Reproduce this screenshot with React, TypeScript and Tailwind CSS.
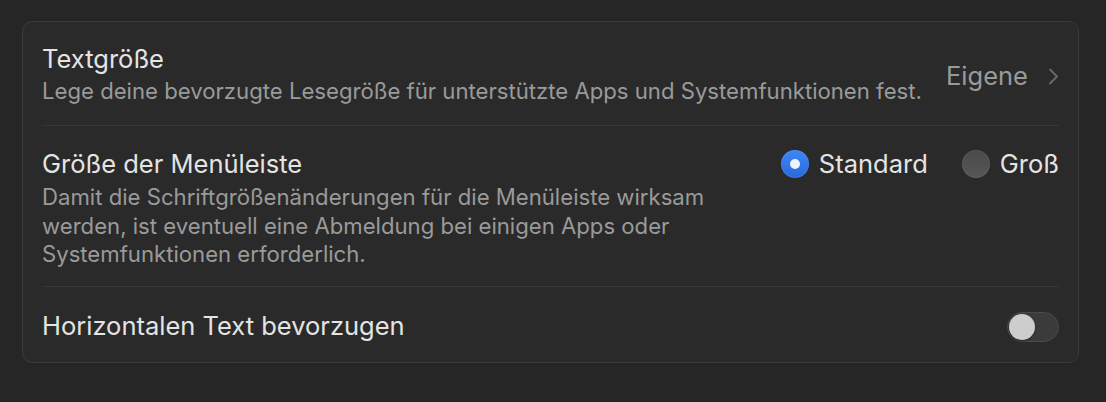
import React from 'react';

const font = { fontFamily: 'Inter, "Noto Sans", "Liberation Sans", sans-serif' };

function Radio({ checked, label }: { checked: boolean; label: string }) {
  return (
    <label className="flex items-center gap-[10px]">
      {checked ? (
        <span className="flex h-[28px] w-[28px] items-center justify-center rounded-full bg-gradient-to-b from-[#3d86f7] to-[#2a6adb] shadow-[inset_0_0_0_1px_rgba(255,255,255,0.08)]">
          <span className="h-[10px] w-[10px] rounded-full bg-[#eef3ff]" />
        </span>
      ) : (
        <span className="h-[28px] w-[28px] rounded-full bg-gradient-to-b from-[#4a4a4a] to-[#575757] shadow-[inset_0_0_0_1px_rgba(255,255,255,0.06)]" />
      )}
      <span className="text-[25.5px] leading-[32px] text-[#e4e4e4]">{label}</span>
    </label>
  );
}

function Toggle() {
  return (
    <span className="mt-[2px] flex h-[30px] w-[52px] items-center rounded-full border border-[#4a4a4a] bg-[#3b3b3b] p-[1px]">
      <span className="h-[26px] w-[26px] rounded-full bg-[#cdcdcd] shadow-[0_1px_2px_rgba(0,0,0,0.4)]" />
    </span>
  );
}

export default function App() {
  return (
    <div className="min-h-[402px] w-full bg-[#262626] pl-[22px] pr-[27px] pt-[21px]" style={font}>
      <div className="rounded-[10px] border border-[#3c3c3c] bg-[#2a2a2a] px-[19px]">
        <div className="flex items-center justify-between border-b border-[#373737] pb-[20px] pt-[21px]">
          <div>
            <p className="text-[25.5px] leading-[32px] text-[#e4e4e4]">Textgröße</p>
            <p className="mt-[2px] text-[22.15px] leading-[28px] text-[#9a9a9a]">
              Lege deine bevorzugte Lesegröße für unterstützte Apps und Systemfunktionen fest.
            </p>
          </div>
          <div className="mt-[4px] flex items-center gap-[20px]">
            <span className="text-[25.5px] leading-[32px] text-[#9a9a9a]">Eigene</span>
            <svg width="11" height="17" viewBox="0 0 11 17" fill="none">
              <path d="M2 1.5l7 7-7 7" stroke="#6b6b6b" strokeWidth="1.8" strokeLinecap="round" strokeLinejoin="round" />
            </svg>
          </div>
        </div>

        <div className="flex items-start justify-between border-b border-[#373737] pb-[17px] pt-[22px]">
          <div>
            <p className="text-[25.5px] leading-[32px] text-[#e4e4e4]">Größe der Menüleiste</p>
            <p className="mt-[3px] text-[22.15px] leading-[28.5px] text-[#9a9a9a]">
              Damit die Schriftgrößenänderungen für die Menüleiste wirksam
              <br />
              werden, ist eventuell eine Abmeldung bei einigen Apps oder
              <br />
              Systemfunktionen erforderlich.
            </p>
          </div>
          <div className="flex items-center gap-[34px]">
            <Radio checked label="Standard" />
            <Radio checked={false} label="Groß" />
          </div>
        </div>

        <div className="flex items-center justify-between pb-[20px] pt-[23px]">
          <p className="text-[25.5px] leading-[32px] text-[#e4e4e4]">Horizontalen Text bevorzugen</p>
          <Toggle />
        </div>
      </div>
    </div>
  );
}
